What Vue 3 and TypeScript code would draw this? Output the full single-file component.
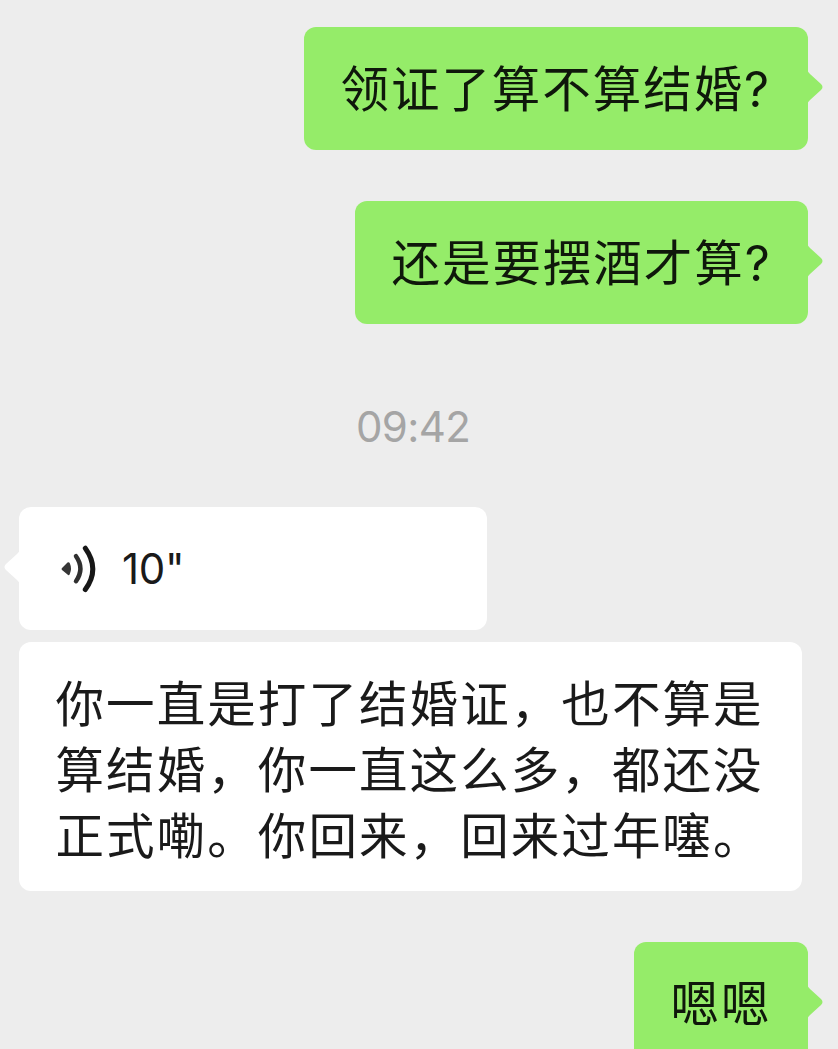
<script setup lang="ts">
interface Message {
  id: string
  text: string
}

const sent: Message[] = [
  { id: 'question', text: '领证了算不算结婚' },
  { id: 'followup', text: '还是要摆酒才算' },
]
const transcript: string[] = [
  '你一直是打了结婚证，也不算是',
  '算结婚，你一直这么多，都还没',
  '正式嘞。你回来，回来过年噻。',
]
</script>

<template>
  <main class="chat">
    <div v-for="m in sent" :key="m.id" class="bubble sent" :class="m.id">
      <span class="copy">{{ m.text }}<span class="mark">?</span></span>
      <svg class="tail" viewBox="0 0 16 36"><path d="M0 1Q1 3 3 5L14 15Q17 18 14 21L3 31Q1 33 0 35Z" /></svg>
    </div>
    <time class="time">09:42</time>
    <div class="bubble voice">
      <svg class="tail" viewBox="0 0 16 36"><path d="M16 1Q15 3 13 5L2 15Q-1 18 2 21L13 31Q15 33 16 35Z" /></svg>
      <svg class="wave" viewBox="0 0 38 50">
        <path class="dot" d="M2 24 7.500 18.500Q9 17.500 9.800 19.300Q12.200 24.500 9.800 30Q9 32 7.500 30.600L2 26Q1 25 2 24Z" />
        <path class="arc" d="M16 12.200Q24.800 24.500 16 37.200" />
        <path class="arc outer" d="M25.300 4.200Q40.300 25 25.300 45.500" />
      </svg>
      <span class="duration">10"</span>
    </div>
    <div class="bubble transcript">
      <div v-for="line in transcript" :key="line" class="line">{{ line }}</div>
    </div>
    <div class="bubble sent reply">
      <span class="copy">嗯嗯</span>
      <svg class="tail" viewBox="0 0 16 36"><path d="M0 1Q1 3 3 5L14 15Q17 18 14 21L3 31Q1 33 0 35Z" /></svg>
    </div>
  </main>
</template>

<style>
body {
  background: #ededed;
  overflow: hidden;
}
</style>

<style scoped>
.chat {
  box-sizing: border-box;
  width: 838px;
  height: 1049px;
  padding: 27px 30px 0 19px;
  display: flex;
  flex-direction: column;
  background: #ededed;
  color: #1a1a1a;
  font-family: Inter, "Noto Sans CJK SC", sans-serif;
  overflow: hidden;
}
.bubble {
  box-sizing: border-box;
  position: relative;
  flex: none;
  border-radius: 12px;
  background: #fff;
}
.sent {
  align-self: flex-end;
  height: 123px;
  padding-left: 36.5px;
  background: #95ec69;
  color: #0f180b;
  line-height: 119px;
  font-size: 48.5px;
  letter-spacing: 1.95px;
  white-space: nowrap;
}
.copy {
  font-family: "Noto Sans CJK SC", sans-serif;
}
.mark {
  font-family: Inter, sans-serif;
  font-size: 49px;
}
.question {
  width: 504px;
}
.followup {
  width: 453px;
  margin-top: 51px;
}
.tail {
  position: absolute;
  right: -15px;
  top: 42px;
  width: 16px;
  height: 36px;
  fill: #95ec69;
}
.time {
  height: 60px;
  margin: 73px 0 50px 337px;
  color: #a5a5a5;
  font-size: 42px;
  letter-spacing: -0.65px;
  line-height: 60px;
}
.voice {
  width: 468px;
  height: 123px;
  padding-left: 41px;
  display: flex;
  align-items: center;
}
.voice .tail {
  right: auto;
  left: -15px;
  fill: #fff;
}
.wave {
  width: 38px;
  height: 50px;
}
.dot {
  fill: #363636;
}
.arc {
  fill: none;
  stroke: #303030;
  stroke-width: 4.5;
  stroke-linecap: round;
}
.outer {
  stroke: #171717;
  stroke-width: 5;
}
.duration {
  margin-left: 24px;
  font-size: 42px;
  letter-spacing: -0.3px;
}
.transcript {
  width: 783px;
  height: 249px;
  margin-top: 12px;
  padding: 26px 0 0 36.5px;
  font-family: "Noto Sans CJK SC", sans-serif;
  font-size: 48.5px;
  letter-spacing: 2.08px;
}
.line {
  height: 66px;
  line-height: 66px;
  white-space: nowrap;
}
.reply {
  width: 174px;
  margin-top: 51px;
}
</style>
